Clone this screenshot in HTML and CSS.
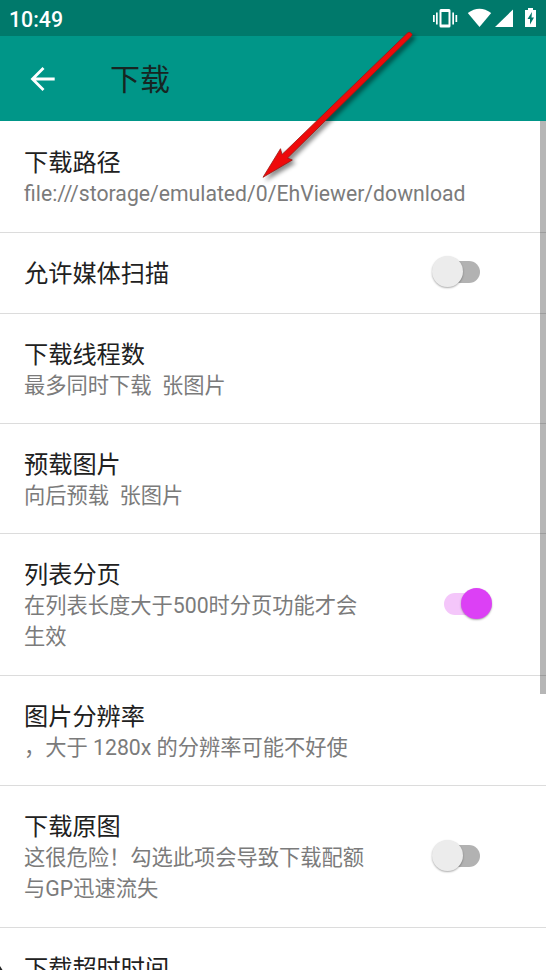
FILE: index.html
```html
<!DOCTYPE html>
<html lang="zh-CN">
<head>
<meta charset="utf-8">
<title>下载</title>
<link rel="stylesheet" href="styles.css">
</head>
<body>
<div class="screen">
  <div class="statusbar">
    <span class="clock">10:49</span>
    <svg class="status-icons" width="110" height="24" viewBox="432 6 110 24" fill="#fff">
      <path d="M441 9h8q1.500 0 1.500 1.500v15.500q0 1.500-1.500 1.500h-8q-1.500 0-1.500-1.500v-15.500q0-1.500 1.500-1.500zM441.500 12v12.500h7v-12.500z" fill-rule="evenodd"/>
      <path d="M433 15h1.700v7h-1.700zM436 12.500h1.700v12h-1.700zM452.300 12.500h1.700v12h-1.700zM455.500 15h1.700v7h-1.700z"/>
      <path d="M467.800 13Q479.500 4.500 491.200 13L479.500 27Z"/>
      <path d="M513 9.500v17.500h-18z"/>
      <path d="M528 8h5v2h3v17h-11v-17h3zM532 12l-4.500 7h2.500v5.500l4-7h-2.500z" fill-rule="evenodd"/>
    </svg>
  </div>
  <header class="toolbar">
    <svg class="back" width="26" height="26" viewBox="0 0 26 26"><path d="M24.700 13H3M13.500 2L2.500 13L13.500 24" fill="none" stroke="#fff" stroke-width="2.800"/></svg>
    <h1 class="title">下载</h1>
  </header>
  <main class="list">
    <section class="row medium"><div class="text"><h2>下载路径</h2><p class="path">file:///storage/emulated/0/EhViewer/download</p></div></section>
    <section class="row small"><div class="text"><h2>允许媒体扫描</h2></div><span class="switch"></span></section>
    <section class="row medium"><div class="text"><h2>下载线程数</h2><p>最多同时下载&nbsp; 张图片</p></div></section>
    <section class="row medium"><div class="text"><h2>预载图片</h2><p>向后预载&nbsp; 张图片</p></div></section>
    <section class="row large"><div class="text"><h2>列表分页</h2><p>在列表长度大于500时分页功能才会<br>生效</p></div><span class="switch on"></span></section>
    <section class="row medium"><div class="text"><h2>图片分辨率</h2><p>，大于 1280x 的分辨率可能不好使</p></div></section>
    <section class="row large"><div class="text"><h2>下载原图</h2><p>这很危险！勾选此项会导致下载配额<br>与GP迅速流失</p></div><span class="switch"></span></section>
    <section class="row medium"><div class="text"><h2>下载超时时间</h2></div></section>
  </main>
  <div class="scrollbar"></div>
  <svg class="arrow" width="546" height="200" viewBox="0 0 546 200">
    <path d="M411.300 36.300L287.500 158L292.300 160L263 177.300L280.500 148.700L282 154.500L407.300 33.200Q409 31.500 411 33T411.300 36.300Z" fill="#ee0a0a" stroke="#9c1712" stroke-width=".8"/>
  </svg>
  <svg class="corner" width="3" height="4" viewBox="0 0 3 4"><path d="M0 0L2.500 4H0Z" fill="#222"/></svg>
</div>
</body>
</html>
```
FILE: styles.css
```css
* { box-sizing: border-box; }
body { margin: 0; font-family: Roboto, "Noto Sans CJK SC", sans-serif; }
.screen { position: relative; width: 546px; height: 970px; overflow: hidden; background: #fff; }
.statusbar { height: 36px; background: #00796b; display: flex; align-items: center; justify-content: space-between; padding: 0 4px 0 9px; }
.clock { color: #fff; font-size: 21.300px; font-weight: 500; padding-top: 2px; }
.toolbar { height: 85px; background: #009688; display: flex; align-items: center; padding-left: 30px; }
.title { margin: 2px 0 0 54px; font-size: 30px; line-height: 40px; font-weight: 400; color: #172522; }
.row { display: flex; justify-content: space-between; border-bottom: 1px solid #dcdcdc; padding: 26px 54px 0 24px; }
.small { height: 81px; }
.medium { height: 110px; }
.medium:first-child { height: 112px; padding-top: 27px; }
.large { height: 142px; }
h2 { margin: 0; font-size: 24.200px; line-height: 30px; font-weight: 400; color: #212121; }
p { margin: 0; font-size: 21.250px; line-height: 31px; color: #7b7b7b; white-space: nowrap; }
.path { font-size: 21.200px; }
.switch { position: relative; align-self: center; width: 60px; height: 34px; margin-top: -28px; }
.switch::before { content: ""; position: absolute; left: 12px; top: 6px; width: 36px; height: 22px; border-radius: 11px; background: #b2b2b2; }
.switch::after { content: ""; position: absolute; left: 0; top: 1px; width: 31px; height: 31px; border-radius: 50%; background: #ececec; box-shadow: 0 1px 2px #0005; }
.switch.on::after { left: 29px; background: #dc40f5; }
.switch.on::before { background: #f4c6fa; }
.scrollbar { position: absolute; right: 0; top: 121px; width: 6px; height: 573px; background: #00000049; }
.arrow { position: absolute; left: 0; top: 0; filter: drop-shadow(3px 3px 2px #0007); }
.corner { position: absolute; left: 0; bottom: 0; }
```
